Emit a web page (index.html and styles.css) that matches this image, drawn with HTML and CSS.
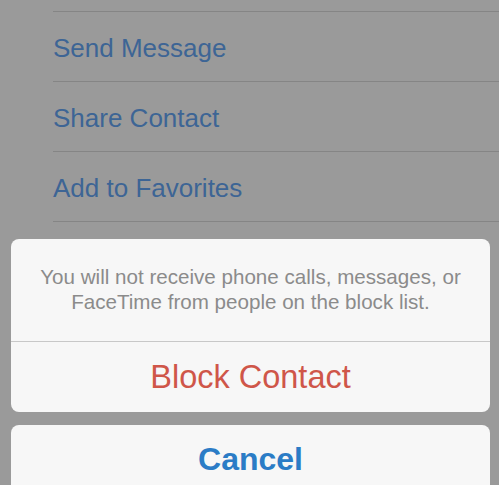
FILE: index.html
```html
<!DOCTYPE html>
<html>
<head>
<meta charset="utf-8">
<link rel="stylesheet" href="styles.css">
</head>
<body>
<div class="list">
  <div class="row">Send Message</div>
  <div class="row">Share Contact</div>
  <div class="row">Add to Favorites</div>
  <div class="row"></div>
</div>
<div class="sheet">
  <div class="card">
    <div class="message">You will not receive phone calls, messages, or<br>FaceTime from people on the block list.</div>
    <div class="action destructive">Block Contact</div>
  </div>
  <div class="card">
    <div class="action cancel">Cancel</div>
  </div>
</div>
</body>
</html>
```
FILE: styles.css
```css
html, body {
  margin: 0;
  padding: 0;
}
body {
  width: 499px;
  height: 485px;
  overflow: hidden;
  background: #9a9a9a;
  font-family: "Liberation Sans", Arial, sans-serif;
  position: relative;
}
.list {
  padding-top: 11px;
  padding-left: 53px;
}
.row {
  border-top: 1px solid #858585;
  display: flex;
  align-items: center;
  font-size: 26px;
  color: #3d6595;
  box-sizing: border-box;
  height: 70px;
  padding-top: 3px;
}
.sheet {
  position: absolute;
  top: 239px;
  left: 11px;
  width: 479px;
  display: flex;
  flex-direction: column;
  gap: 13px;
}
.card {
  background: #f7f7f7;
  border-radius: 8px;
  overflow: hidden;
}
.message {
  height: 103px;
  box-sizing: border-box;
  padding-top: 25px;
  text-align: center;
  color: #8b8b8b;
  font-size: 20.6px;
  line-height: 25px;
  border-bottom: 1px solid #c8c8c8;
}
.action {
  height: 69px;
  display: flex;
  align-items: center;
  justify-content: center;
  font-size: 32.5px;
}
.destructive {
  color: #cf5649;
  padding-top: 1px;
}
.cancel {
  color: #2b7cc6;
  font-weight: bold;
  font-size: 32px;
  padding-bottom: 2px;
}
```
